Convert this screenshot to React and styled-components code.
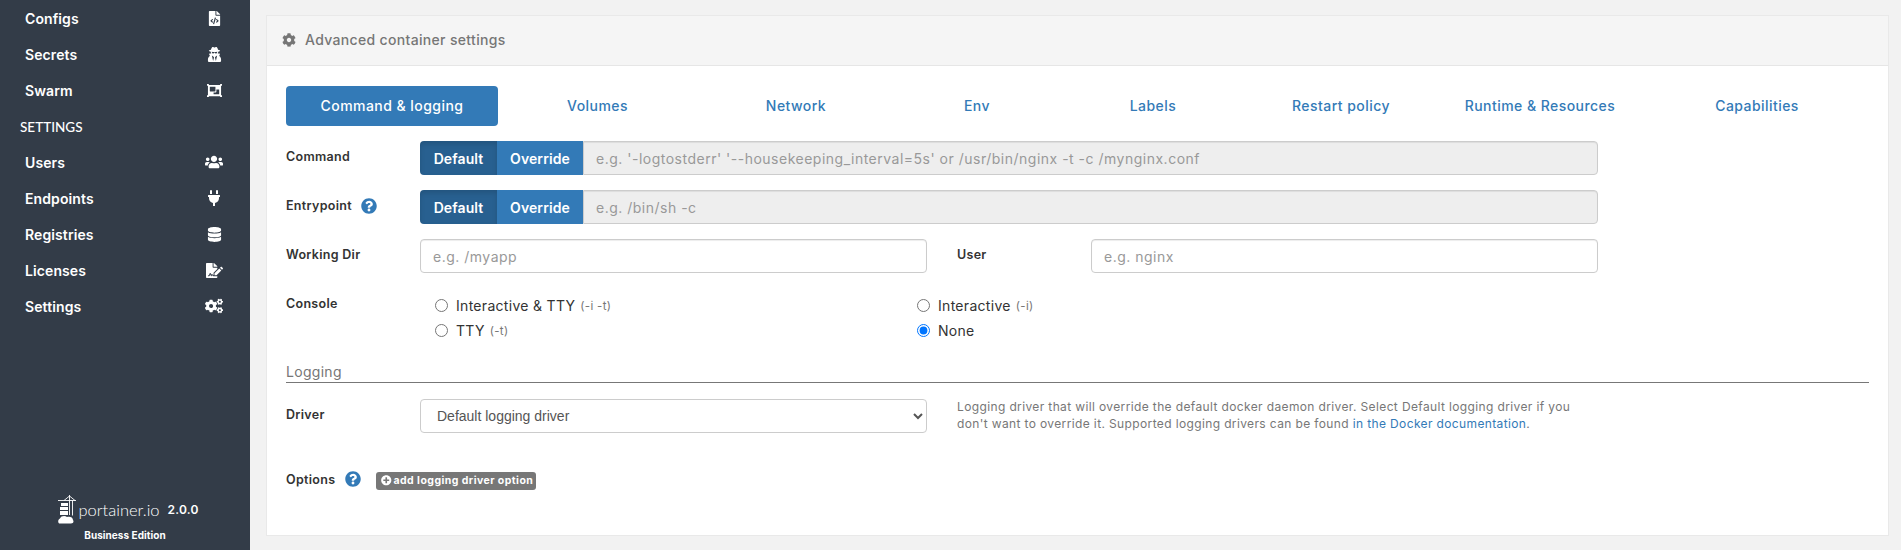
import React from "react";
import styled, { createGlobalStyle } from "styled-components";
import {
  FaFileCode,
  FaUserSecret,
  FaObjectGroup,
  FaUsers,
  FaPlug,
  FaDatabase,
  FaFileSignature,
  FaCogs,
  FaCog,
  FaQuestionCircle,
  FaPlusCircle,
} from "react-icons/fa";

const GlobalStyle = createGlobalStyle`
  html, body {
    margin: 0;
    height: 100%;
    overflow: hidden;
    background: #f2f2f2;
    font-family: Inter, "Open Sans", sans-serif;
  }
  * { box-sizing: border-box; }
`;

const Page = styled.div`
  display: flex;
  height: 550px;
`;

const Sidebar = styled.aside`
  width: 250px;
  flex: none;
  display: flex;
  flex-direction: column;
  justify-content: space-between;
  background: #333c48;
  color: #fff;
`;

const NavList = styled.ul`
  list-style: none;
  margin: 0;
  padding: 0;
`;

const NavItem = styled.li`
  height: 36px;
  display: flex;
  align-items: center;
  justify-content: space-between;
  padding: 0 23px 0 25px;
  font-size: 14px;
  font-weight: 600;
  letter-spacing: 0.1px;
`;

const NavIcon = styled.span`
  width: 26px;
  display: flex;
  justify-content: center;
  font-size: ${(p) => p.$size}px;
`;

const NavTitle = styled.li`
  height: 36px;
  display: flex;
  align-items: center;
  padding: 2px 0 0 20px;
  font-family: Lato, sans-serif;
  font-size: 13.5px;
  font-weight: 500;
`;

const Footer = styled.div`
  display: flex;
  flex-direction: column;
  align-items: center;
  padding: 0 0 9px 0;
`;

const Brand = styled.div`
  display: flex;
  align-items: center;
  padding: 2px 0 0 7px;
`;

const BrandName = styled.span`
  font-family: Lato, sans-serif;
  font-size: 16.5px;
  font-weight: 300;
  margin-left: 1px;
`;

const Version = styled.span`
  font-size: 12px;
  font-weight: 600;
  letter-spacing: 0.2px;
  margin-left: 8px;
`;

const Edition = styled.div`
  font-size: 10px;
  font-weight: 700;
  letter-spacing: 0.05px;
  margin-top: 5px;
`;

const Main = styled.main`
  flex: 1;
  padding: 15px 14px 14px 16px;
`;

const Card = styled.section`
  height: 521px;
  background: #fff;
  border: 1px solid #e9e9e9;
`;

const CardHeader = styled.header`
  height: 50px;
  display: flex;
  align-items: center;
  gap: 9px;
  padding: 0 0 2px 15px;
  background: #f5f5f5;
  border-bottom: 1px solid #e6e6e6;
  color: #767676;
  font-size: 14px;
  font-weight: 500;
  letter-spacing: 0.33px;
`;

const CardBody = styled.div`
  padding: 20px 19px 0 19px;
`;

const Tabs = styled.nav`
  display: flex;
  height: 40px;
`;

const Tab = styled.a`
  width: ${(p) => p.$width}px;
  display: flex;
  align-items: center;
  justify-content: center;
  padding-bottom: 2px;
  border-radius: 4px;
  font-size: 14px;
  font-weight: 500;
  letter-spacing: 0.45px;
  color: ${(p) => (p.$active ? "#fff" : "#337ab7")};
  background: ${(p) => (p.$active ? "#337ab7" : "transparent")};
`;

const Row = styled.div`
  display: grid;
  grid-template-columns: 134px 507px 30px 134px 507px;
  align-items: ${(p) => (p.$top ? "start" : "center")};
  margin-top: ${(p) => p.$mt}px;
`;

const Label = styled.label`
  grid-column: ${(p) => p.$col || "auto"};
  display: flex;
  align-items: center;
  gap: 9px;
  margin-bottom: 3px;
  font-size: 12.5px;
  font-weight: 600;
  letter-spacing: 0.3px;
  color: #333;
`;

const ConsoleLabel = styled(Label)`
  margin: 3px 0 0;
`;

const HelpIcon = styled(FaQuestionCircle)`
  color: #337ab7;
  font-size: 16px;
`;

const Group = styled.div`
  grid-column: 2 / -1;
  display: flex;
  height: 34px;
`;

const ToggleButton = styled.button`
  width: ${(p) => p.$width}px;
  border: 0;
  padding: 0;
  font-family: inherit;
  font-size: 14px;
  font-weight: 600;
  letter-spacing: 0.1px;
  color: #fff;
  background: ${(p) => (p.$on ? "#286090" : "#337ab7")};
  border-radius: ${(p) => (p.$on ? "4px 0 0 4px" : "0")};
  box-shadow: ${(p) => (p.$on ? "inset 0 3px 5px rgba(0,0,0,.125)" : "none")};
`;

const TextInput = styled.input`
  grid-column: ${(p) => p.$col || "auto"};
  flex: 1;
  width: 100%;
  height: 34px;
  padding: 0 12px;
  border: 1px solid #ccc;
  border-radius: ${(p) => (p.$joined ? "0 4px 4px 0" : "4px")};
  background: ${(p) => (p.disabled ? "#eee" : "#fff")};
  box-shadow: inset 0 1px 1px rgba(0,0,0,.075);
  font-family: inherit;
  font-size: 14px;
  letter-spacing: 0.5px;
  &::placeholder { color: #999; opacity: 1; }
`;

const Radios = styled.div`
  grid-column: 2 / -1;
  display: grid;
  grid-template-columns: 482px 482px;
  grid-auto-rows: 25px;
  padding-left: 15px;
`;

const RadioLabel = styled.label`
  display: flex;
  align-items: center;
  gap: 2px;
  font-size: 14px;
  letter-spacing: 0.3px;
  color: #333;
  input { margin: 0 6px 0 0; width: 13px; height: 13px; accent-color: #0075ff; }
  small { font-size: 11.5px; letter-spacing: 0.3px; color: #777; margin-left: 3px; }
`;

const SectionTitle = styled.div`
  margin-top: 18px;
  height: 22px;
  display: flex;
  align-items: center;
  border-bottom: 1px solid #777;
  color: #767676;
  font-size: 14px;
  letter-spacing: 0.3px;
`;

const Select = styled.select`
  width: 100%;
  height: 34px;
  padding: 0 12px;
  border: 1px solid #ccc;
  border-radius: 4px;
  background: #fff;
  color: #555;
  font-family: "Liberation Sans", sans-serif;
  font-size: 14px;
`;

const Help = styled.p`
  grid-column: 4 / -1;
  margin: -3px 0 0;
  width: 625px;
  font-size: 12px;
  letter-spacing: 0.37px;
  line-height: 17px;
  color: #777;
  a { color: #337ab7; }
`;

const OptionsRow = styled.div`
  display: flex;
  align-items: center;
  margin-top: 38px;
`;

const OptionsLabel = styled(Label)`
  width: 90px;
  gap: 10px;
`;

const AddButton = styled.button`
  display: flex;
  align-items: center;
  gap: 2px;
  height: 18px;
  padding: 0 3px 0 5px;
  border: 0;
  border-radius: 3px;
  background: #777;
  color: #fff;
  font-family: inherit;
  font-size: 10.5px;
  font-weight: 700;
  letter-spacing: 0.45px;
  white-space: nowrap;
`;

const nav = [
  { label: "Configs", icon: <FaFileCode />, size: 15 },
  { label: "Secrets", icon: <FaUserSecret />, size: 15 },
  { label: "Swarm", icon: <FaObjectGroup />, size: 15 },
  { title: "SETTINGS" },
  { label: "Users", icon: <FaUsers />, size: 18 },
  { label: "Endpoints", icon: <FaPlug />, size: 16 },
  { label: "Registries", icon: <FaDatabase />, size: 15 },
  { label: "Licenses", icon: <FaFileSignature />, size: 17 },
  { label: "Settings", icon: <FaCogs />, size: 18 },
];

const tabs = [
  ["Command & logging", 212],
  ["Volumes", 199],
  ["Network", 198],
  ["Env", 164],
  ["Labels", 188],
  ["Restart policy", 188],
  ["Runtime & Resources", 210],
  ["Capabilities", 224],
];

function Logo() {
  return (
    <svg width="19" height="29" viewBox="0 0 19 29" fill="none" stroke="#fff">
      <path d="M0 5.5h18M6 5.5L11.5 1 17 5.5M11.5 0v20M14.5 5.5v15" strokeWidth="0.9" />
      <path d="M3 8h7v3H3zM2 12h8v3H2zM2 16h8v4H2z" fill="#fff" stroke="none" />
      <path
        d="M2 28.5c-2.4 0-2.4-4 0-5 .8-2.6 5-3.2 7-1.5 2.6-1 6 .2 6 3 1.2 2 0 3.500-2 3.500z"
        fill="#fff"
        stroke="none"
      />
    </svg>
  );
}

function ModeGroup({ placeholder }) {
  return (
    <Group>
      <ToggleButton $on $width={77}>Default</ToggleButton>
      <ToggleButton $width={86}>Override</ToggleButton>
      <TextInput disabled $joined placeholder={placeholder} />
    </Group>
  );
}

export default function App() {
  return (
    <Page>
      <GlobalStyle />
      <Sidebar>
        <NavList>
          {nav.map((item) =>
            item.title ? (
              <NavTitle key={item.title}>{item.title}</NavTitle>
            ) : (
              <NavItem key={item.label}>
                {item.label}
                <NavIcon $size={item.size}>{item.icon}</NavIcon>
              </NavItem>
            )
          )}
        </NavList>
        <Footer>
          <Brand>
            <Logo />
            <BrandName>portainer.io</BrandName>
            <Version>2.0.0</Version>
          </Brand>
          <Edition>Business Edition</Edition>
        </Footer>
      </Sidebar>
      <Main>
        <Card>
          <CardHeader>
            <FaCog />
            Advanced container settings
          </CardHeader>
          <CardBody>
            <Tabs>
              {tabs.map(([label, width], i) => (
                <Tab key={label} $width={width} $active={i === 0}>
                  {label}
                </Tab>
              ))}
            </Tabs>
            <Row $mt={15}>
              <Label>Command</Label>
              <ModeGroup placeholder="e.g. '-logtostderr' '--housekeeping_interval=5s' or /usr/bin/nginx -t -c /mynginx.conf" />
            </Row>
            <Row $mt={15}>
              <Label>
                Entrypoint <HelpIcon />
              </Label>
              <ModeGroup placeholder="e.g. /bin/sh -c" />
            </Row>
            <Row $mt={15}>
              <Label>Working Dir</Label>
              <TextInput $col="2" placeholder="e.g. /myapp" />
              <Label $col="4">User</Label>
              <TextInput $col="5" placeholder="e.g. nginx" />
            </Row>
            <Row $mt={20} $top>
              <ConsoleLabel>Console</ConsoleLabel>
              <Radios>
                <RadioLabel>
                  <input type="radio" name="console" />
                  Interactive &amp; TTY <small>(-i -t)</small>
                </RadioLabel>
                <RadioLabel>
                  <input type="radio" name="console" />
                  Interactive <small>(-i)</small>
                </RadioLabel>
                <RadioLabel>
                  <input type="radio" name="console" />
                  TTY <small>(-t)</small>
                </RadioLabel>
                <RadioLabel>
                  <input type="radio" name="console" defaultChecked />
                  None
                </RadioLabel>
              </Radios>
            </Row>
            <SectionTitle>Logging</SectionTitle>
            <Row $mt={16}>
              <Label>Driver</Label>
              <Select defaultValue="default">
                <option value="default">Default logging driver</option>
              </Select>
              <Help>
                Logging driver that will override the default docker daemon driver. Select Default
                logging driver if you don't want to override it. Supported logging drivers can be
                found <a>in the Docker documentation</a>.
              </Help>
            </Row>
            <OptionsRow>
              <OptionsLabel>
                Options <HelpIcon />
              </OptionsLabel>
              <AddButton>
                <FaPlusCircle />
                add logging driver option
              </AddButton>
            </OptionsRow>
          </CardBody>
        </Card>
      </Main>
    </Page>
  );
}
